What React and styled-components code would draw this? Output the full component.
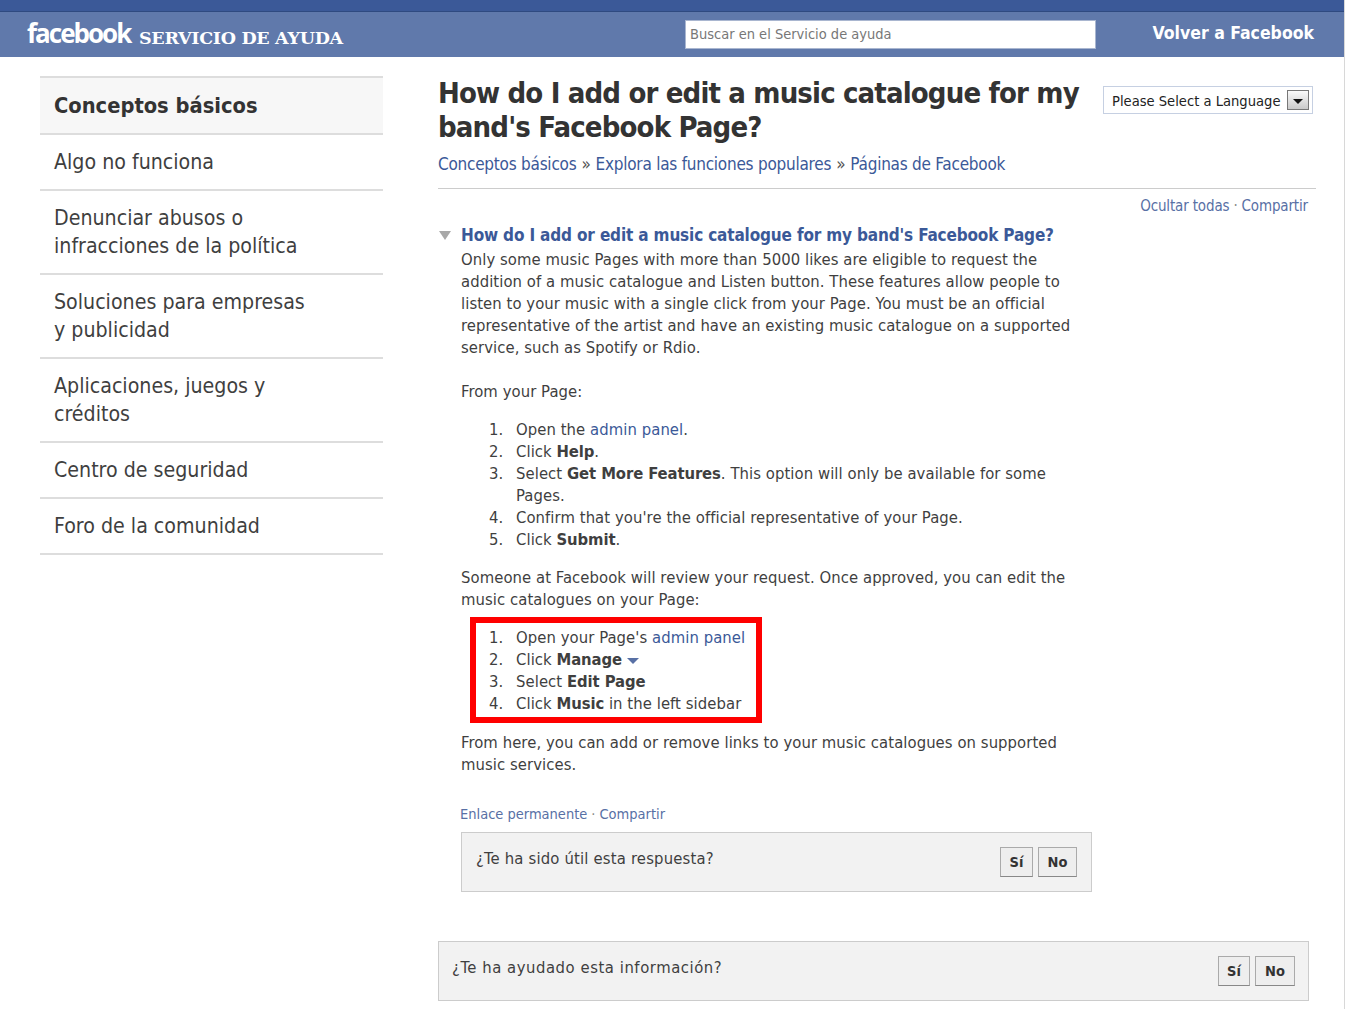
import React from "react";
import styled, { createGlobalStyle } from "styled-components";

const font = `"DejaVu Sans Condensed", "DejaVu Sans", "Liberation Sans", sans-serif`;

const Global = createGlobalStyle`
  html, body {
    margin: 0;
    padding: 0;
    background: #fff;
    font-family: ${font};
    color: #333;
  }
`;

const Page = styled.div`
  width: 1345px;
  height: 1009px;
  overflow: hidden;
  border-right: 1px solid #d8d8d8;
  box-sizing: border-box;
`;

const TopStrip = styled.div`
  height: 11px;
  background: #3b5998;
  border-bottom: 1px solid #2f4a80;
`;

const Header = styled.header`
  height: 45px;
  background: #6079ab;
  display: flex;
  align-items: center;
  color: #fff;
  padding: 0 30px 0 27px;
`;

const Logo = styled.div`
  font-family: "Open Sans", sans-serif;
  font-weight: 700;
  font-size: 26px;
  letter-spacing: -2px;
  line-height: 45px;
  width: 112px;
  margin-top: -2px;
`;

const LogoSub = styled.div`
  font-family: "DejaVu Serif", serif;
  font-weight: 700;
  font-size: 17.5px;
  letter-spacing: -0.3px;
  width: 546px;
  margin-top: 7px;
`;

const Search = styled.div`
  width: 411px;
  height: 29px;
  box-sizing: border-box;
  background: #fff;
  border: 1px solid #a9b6d0;
  font-size: 14.5px;
  line-height: 27px;
  padding-left: 4px;
  color: #777;
`;

const BackLink = styled.a`
  margin-left: auto;
  font-weight: 700;
  font-size: 17.5px;
  margin-top: -3px;
`;

const Body = styled.div`
  display: flex;
  padding: 19px 0 0 40px;
`;

const Sidebar = styled.nav`
  width: 343px;
  margin-right: 55px;
  border-top: 2px solid #ddd;
  flex-shrink: 0;
  align-self: flex-start;
`;

const NavItem = styled.div`
  border-bottom: 2px solid #ddd;
  padding: ${(p) => (p.$active ? "14px 14px 13px" : "13px 14px")};
  font-size: ${(p) => (p.$active ? "21.7px" : "21.2px")};
  line-height: 28px;
  color: ${(p) => (p.$active ? "#333" : "#3f3f3f")};
  font-weight: ${(p) => (p.$active ? 700 : 400)};
  background: ${(p) => (p.$active ? "#f7f7f7" : "#fff")};
`;

const Main = styled.main`
  width: 878px;
`;

const TitleRow = styled.div`
  display: flex;
  align-items: flex-start;
  justify-content: space-between;
  padding-right: 3px;
`;

const Title = styled.h1`
  margin: 0;
  font-size: 29px;
  line-height: 34px;
  font-weight: 700;
  letter-spacing: -0.85px;
  color: #333;
  width: 660px;
`;

const LangSelect = styled.div`
  margin-top: 10px;
  width: 210px;
  height: 28px;
  box-sizing: border-box;
  border: 1px solid #c6d0e2;
  display: flex;
  align-items: center;
  justify-content: space-between;
  padding: 0 3px 0 8px;
  font-size: 14.6px;
  white-space: nowrap;
  color: #222;
`;

const LangArrow = styled.span`
  width: 22px;
  height: 20px;
  box-sizing: border-box;
  border: 1px solid #777;
  background: linear-gradient(#fafafa, #c9c9c9);
  display: flex;
  align-items: center;
  justify-content: center;
  &::after {
    content: "";
    border-top: 5px solid #111;
    border-left: 5px solid transparent;
    border-right: 5px solid transparent;
    margin-top: 3px;
  }
`;

const Crumbs = styled.div`
  margin-top: 8px;
  font-size: 17px;
  letter-spacing: -0.24px;
  line-height: 24px;
  color: #3b5998;
  padding-bottom: 12px;
  border-bottom: 1px solid #ccc;
`;

const CrumbSep = styled.span`
  color: #555;
  margin: 0 5px;
`;

const LinkRow = styled.div`
  font-size: ${(p) => p.$size || "15px"};
  letter-spacing: ${(p) => p.$ls || "-0.15px"};
  line-height: 20px;
  color: #5870a5;
  text-align: ${(p) => p.$align || "left"};
  padding: ${(p) => p.$pad || 0};
`;

const Dot = styled.span`
  color: #888;
  margin: 0 4px;
`;

const Question = styled.div`
  display: flex;
  align-items: center;
  margin-top: 7px;
  height: 24px;
  font-size: 17px;
  letter-spacing: -0.16px;
  font-weight: 700;
  color: #3b5998;
`;

const Caret = styled.span`
  width: 0;
  height: 0;
  border-top: 9px solid #a8a8a8;
  border-left: 6px solid transparent;
  border-right: 6px solid transparent;
  margin-right: 10px;
  margin-left: 1px;
`;

const Answer = styled.div`
  margin: 2px 0 0 23px;
  width: 622px;
  font-size: 16.5px;
  letter-spacing: 0.07px;
  line-height: 22px;
  color: #3f3f3f;
  & b {
    letter-spacing: -0.1px;
  }
`;

const Para = styled.p`
  margin: ${(p) => p.$m || 0};
`;

const Steps = styled.ol`
  margin: ${(p) => p.$m || 0};
  padding: 0 0 0 55px;
  & > li::marker {
    content: counter(list-item) ".\\00a0\\00a0\\2009";
  }
`;

const Boxed = styled.div`
  width: 292px;
  height: 106px;
  box-sizing: border-box;
  margin: 6px 0 0 9px;
  border: 6px solid #f00;
  & > ol {
    padding-left: 40px;
    margin-top: 4px;
  }
`;

const A = styled.span`
  color: #3b5998;
`;

const MenuCaret = styled.span`
  display: inline-block;
  border-top: 6px solid #5870a5;
  border-left: 6px solid transparent;
  border-right: 6px solid transparent;
  margin-left: 5px;
  vertical-align: middle;
`;

const Vote = styled.div`
  margin: ${(p) => p.$m || 0};
  width: ${(p) => p.$w};
  height: ${(p) => p.$h};
  box-sizing: border-box;
  background: #f2f2f2;
  border: 1px solid #ccc;
  display: flex;
  justify-content: space-between;
  padding: 14px ${(p) => p.$right || "14px"} 0 ${(p) => p.$left || "14px"};
  font-size: 16.5px;
  color: #3f3f3f;
`;

const VoteText = styled.div`
  margin-top: 2px;
  letter-spacing: ${(p) => p.$ls};
`;

const Buttons = styled.div`
  display: flex;
  gap: 5px;
`;

const VoteBtn = styled.span`
  height: 30px;
  box-sizing: border-box;
  width: ${(p) => p.$w};
  border: 1px solid #aaa;
  border-bottom-color: #888;
  background: #eee;
  font-size: 14.5px;
  font-weight: 700;
  line-height: 28px;
  text-align: center;
  color: #333;
`;

export default function App() {
  return (
    <Page>
      <Global />
      <TopStrip />
      <Header>
        <Logo>facebook</Logo>
        <LogoSub>SERVICIO DE AYUDA</LogoSub>
        <Search>Buscar en el Servicio de ayuda</Search>
        <BackLink>Volver a Facebook</BackLink>
      </Header>
      <Body>
        <Sidebar>
          <NavItem $active>Conceptos básicos</NavItem>
          <NavItem>Algo no funciona</NavItem>
          <NavItem>Denunciar abusos o<br />infracciones de la política</NavItem>
          <NavItem>Soluciones para empresas<br />y publicidad</NavItem>
          <NavItem>Aplicaciones, juegos y<br />créditos</NavItem>
          <NavItem>Centro de seguridad</NavItem>
          <NavItem>Foro de la comunidad</NavItem>
        </Sidebar>
        <Main>
          <TitleRow>
            <Title>How do I add or edit a music catalogue for my band's Facebook Page?</Title>
            <LangSelect>Please Select a Language<LangArrow /></LangSelect>
          </TitleRow>
          <Crumbs>
            Conceptos básicos<CrumbSep>»</CrumbSep>Explora las funciones populares<CrumbSep>»</CrumbSep>Páginas de Facebook
          </Crumbs>
          <LinkRow $align="right" $pad="7px 8px 0 0">Ocultar todas<Dot>·</Dot>Compartir</LinkRow>
          <Question><Caret />How do I add or edit a music catalogue for my band's Facebook Page?</Question>
          <Answer>
            <Para>Only some music Pages with more than 5000 likes are eligible to request the addition of a music catalogue and Listen button. These features allow people to listen to your music with a single click from your Page. You must be an official representative of the artist and have an existing music catalogue on a supported service, such as Spotify or Rdio.</Para>
            <Para $m="22px 0 0">From your Page:</Para>
            <Steps $m="16px 0 0">
              <li>Open the <A>admin panel</A>.</li>
              <li>Click <b>Help</b>.</li>
              <li>Select <b>Get More Features</b>. This option will only be available for some Pages.</li>
              <li>Confirm that you're the official representative of your Page.</li>
              <li>Click <b>Submit</b>.</li>
            </Steps>
            <Para $m="16px 0 0">Someone at Facebook will review your request. Once approved, you can edit the music catalogues on your Page:</Para>
            <Boxed>
              <Steps>
                <li>Open your Page's <A>admin panel</A></li>
                <li>Click <b>Manage</b><MenuCaret /></li>
                <li>Select <b>Edit Page</b></li>
                <li>Click <b>Music</b> in the left sidebar</li>
              </Steps>
            </Boxed>
            <Para $m="9px 0 0">From here, you can add or remove links to your music catalogues on supported music services.</Para>
          </Answer>
          <LinkRow $pad="28px 0 0 22px" $size="14.5px" $ls="0">Enlace permanente<Dot>·</Dot>Compartir</LinkRow>
          <Vote $m="8px 0 0 23px" $w="631px" $h="60px">
            <VoteText $ls="0.18px">¿Te ha sido útil esta respuesta?</VoteText>
            <Buttons><VoteBtn $w="33px">Sí</VoteBtn><VoteBtn $w="39px">No</VoteBtn></Buttons>
          </Vote>
          <Vote $m="49px 0 0" $w="871px" $h="60px" $left="13px" $right="13px">
            <VoteText $ls="0.55px">¿Te ha ayudado esta información?</VoteText>
            <Buttons><VoteBtn $w="32px">Sí</VoteBtn><VoteBtn $w="40px">No</VoteBtn></Buttons>
          </Vote>
        </Main>
      </Body>
    </Page>
  );
}
